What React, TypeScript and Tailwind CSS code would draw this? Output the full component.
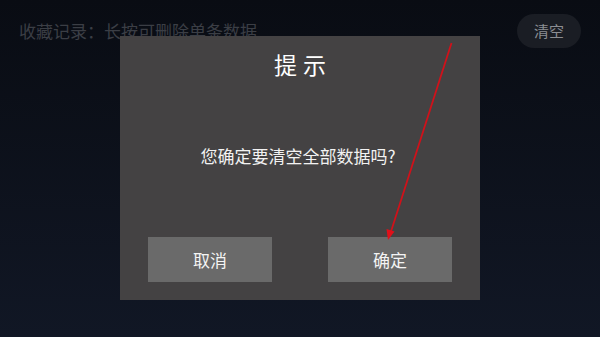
import React from "react";

const font = { fontFamily: '"Noto Sans CJK SC", "Noto Sans", sans-serif' };

export default function App() {
  return (
    <div
      className="relative h-[337px] w-[600px] overflow-hidden bg-gradient-to-b from-[#090c13] to-[#111725]"
      style={font}
    >
      {/* Header */}
      <div className="flex items-center justify-between pl-[19px] pr-[19px] pt-[14px]">
        <span className="text-[17px] leading-[34px] text-[#3b3e45]">收藏记录：长按可删除单条数据</span>
        <button className="h-[34px] w-[64px] rounded-full bg-[#1a1d24] text-[15px] text-[#8b8d92]">清空</button>
      </div>

      {/* Dialog */}
      <div className="absolute left-[120px] top-[36px] flex h-[264px] w-[360px] flex-col items-center bg-[#444243] pt-[13px]">
        <h2 className="pl-[6px] text-[23px] leading-[30px] tracking-[6px] text-white">提示</h2>
        <p className="mt-[65px] pr-[4px] text-[17px] leading-[24px] text-[#f2f2f2]">您确定要清空全部数据吗?</p>
        <div className="mt-[69px] flex w-full justify-between px-[28px]">
          <button className="h-[45px] w-[124px] bg-[#6a6a6a] text-[17px] text-[#f4f4f4]">取消</button>
          <button className="h-[45px] w-[124px] bg-[#6a6a6a] text-[17px] text-[#f4f4f4]">确定</button>
        </div>
      </div>

      {/* Annotation arrow */}
      <svg className="absolute left-0 top-0" width="600" height="337" viewBox="0 0 600 337">
        <line x1="451.5" y1="43" x2="390.5" y2="233" stroke="#d0111a" strokeWidth="1.8" />
        <polygon points="388,240 386.5,229 394.5,231.5" fill="#e0101a" />
      </svg>
    </div>
  );
}
